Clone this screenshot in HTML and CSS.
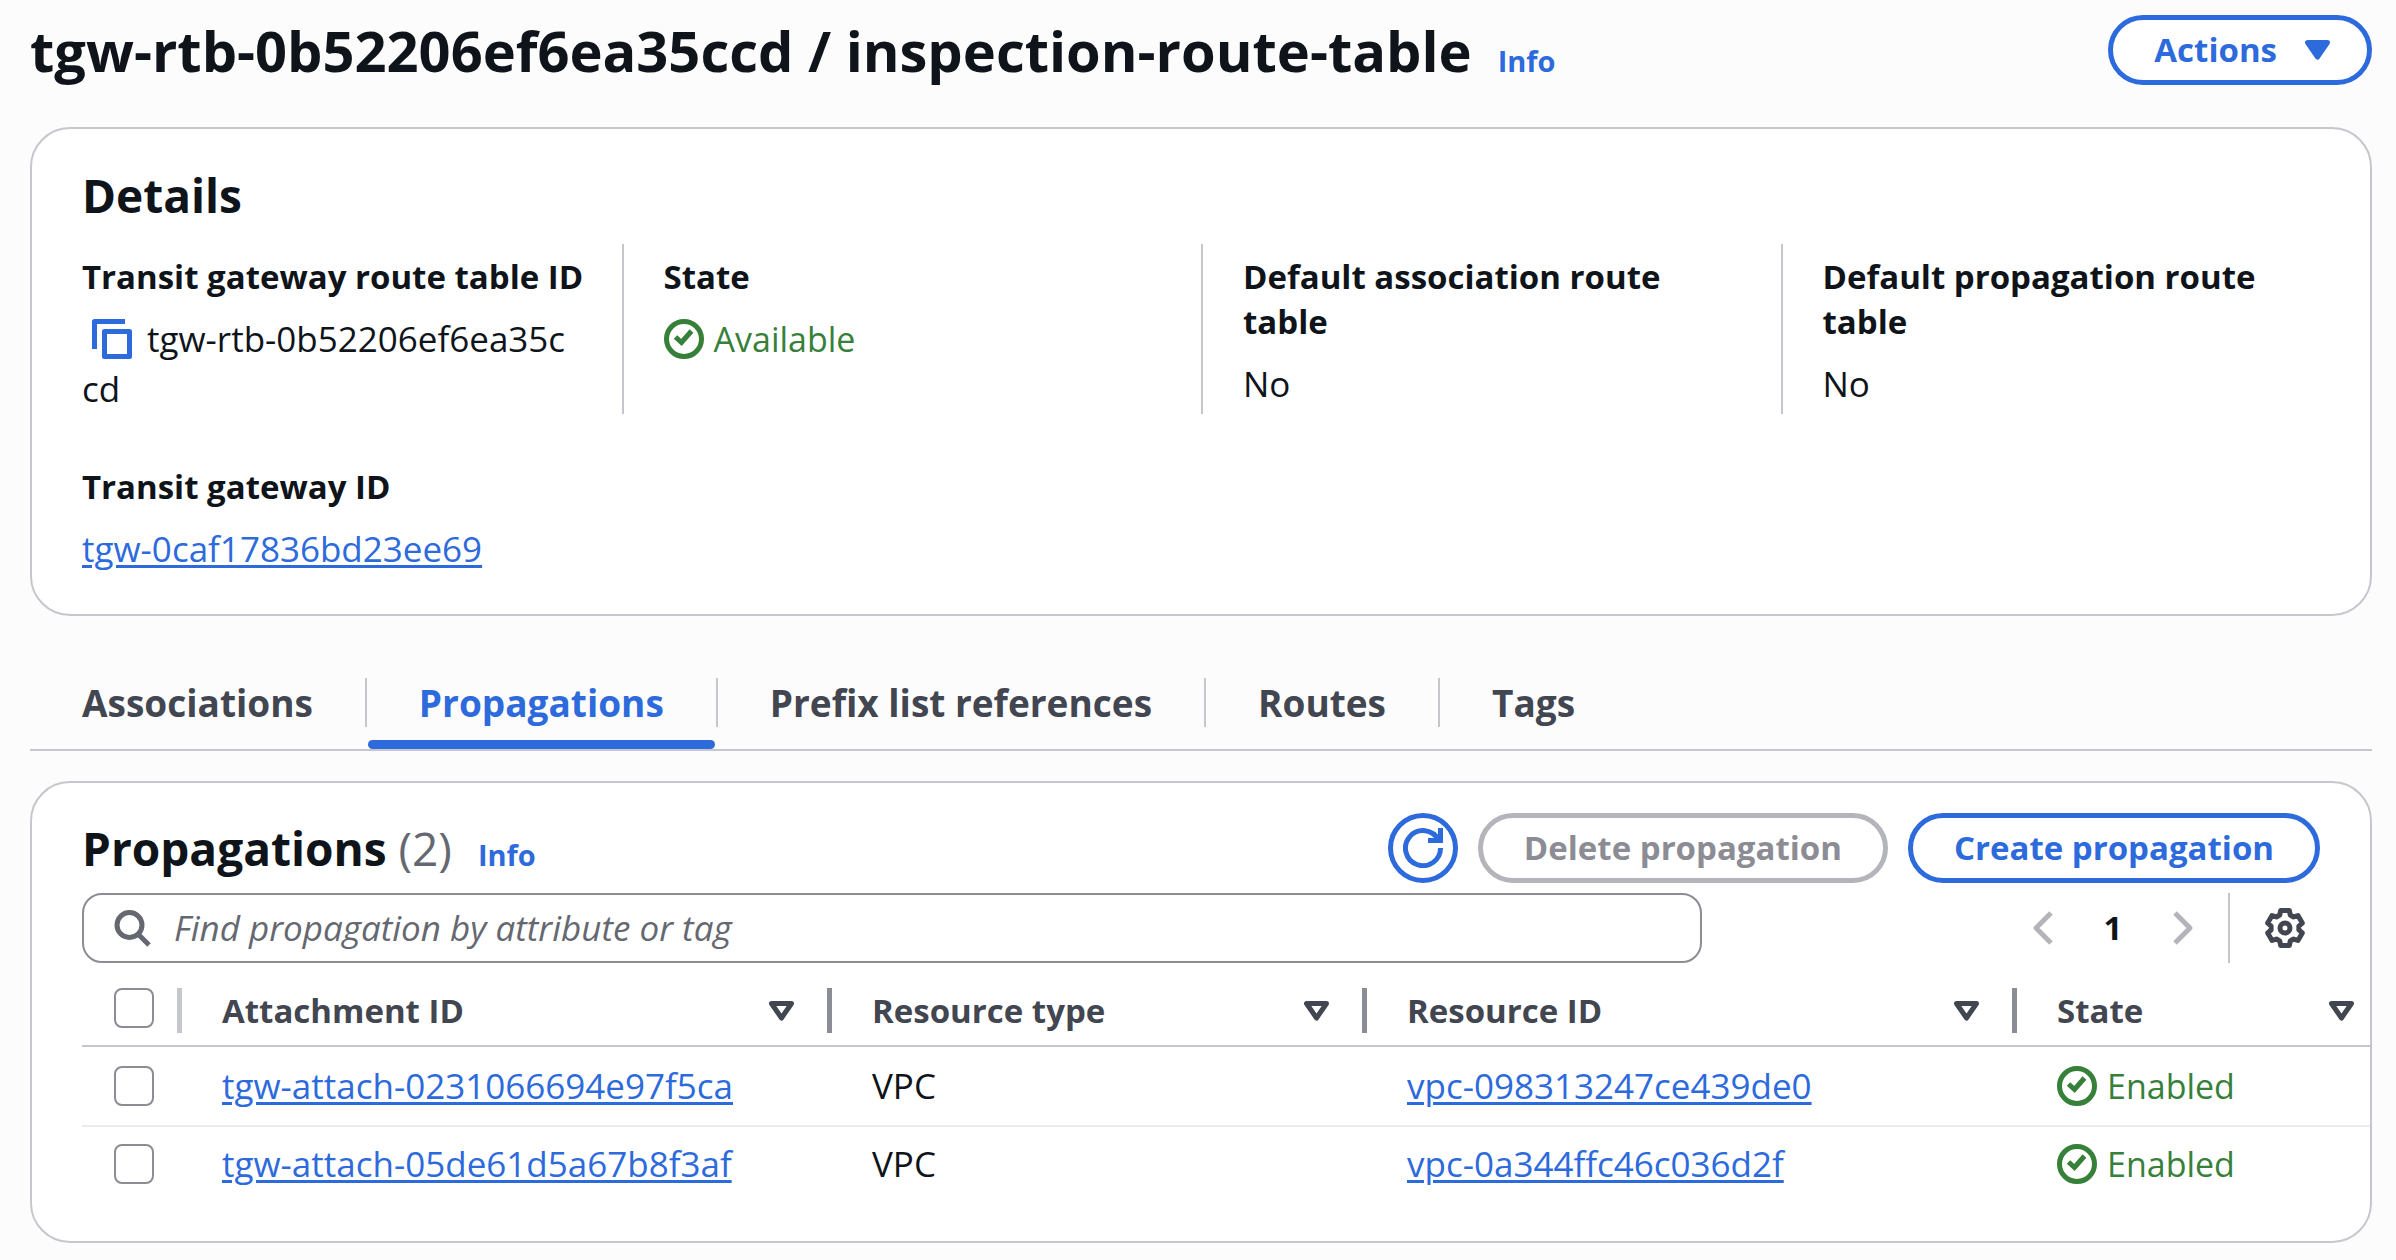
FILE: index.html
```html
<!DOCTYPE html>
<html lang="en">
<head>
<meta charset="utf-8">
<title>Transit gateway route table</title>
<link rel="stylesheet" href="styles.css">
</head>
<body>
<svg class="defs" aria-hidden="true">
  <symbol id="caret" viewBox="0 0 25 20"><path d="M2.5 2.5h20l-10 14.5z" fill="currentColor" stroke="currentColor" stroke-width="5" stroke-linejoin="round"/></symbol>
  <symbol id="sort" viewBox="0 0 25 20"><path d="M2.5 2.5h20l-10 14.5z" fill="none" stroke="currentColor" stroke-width="5" stroke-linejoin="round"/></symbol>
  <symbol id="ok" viewBox="0 0 40 40"><g fill="none" stroke="currentColor" stroke-width="5"><circle cx="20" cy="20" r="17.5"/><path d="M11.5 18l6 5.500L27.500 12"/></g></symbol>
</svg>

<header class="page-header">
  <div class="title-group">
    <h1 class="page-title">tgw-rtb-0b52206ef6ea35ccd / inspection-route-table</h1>
    <a class="info" href="#info">Info</a>
  </div>
  <button class="btn btn-menu" type="button">Actions <svg class="caret"><use href="#caret"/></svg></button>
</header>

<main>
  <section class="card details">
    <h2 class="card-title">Details</h2>
    <dl class="details-grid">
      <div class="detail">
        <dt>Transit gateway route table ID</dt>
        <dd class="break"><button class="copy" type="button" aria-label="Copy ID"><svg class="icon" viewBox="0 0 40 40"><g fill="none" stroke="currentColor" stroke-width="5" stroke-linejoin="round"><path d="M2.500 30V2.500H33"/><path d="M12.500 12.500h25v25h-25z"/></g></svg></button>tgw-rtb-0b52206ef6ea35ccd</dd>
      </div>
      <div class="detail">
        <dt>State</dt>
        <dd class="status"><svg class="icon"><use href="#ok"/></svg>Available</dd>
      </div>
      <div class="detail">
        <dt>Default association route table</dt>
        <dd>No</dd>
      </div>
      <div class="detail">
        <dt>Default propagation route table</dt>
        <dd>No</dd>
      </div>
      <div class="detail">
        <dt>Transit gateway ID</dt>
        <dd><a class="link" href="#tgw">tgw-0caf17836bd23ee69</a></dd>
      </div>
    </dl>
  </section>

  <div class="tabs" role="tablist">
    <button class="tab" type="button" role="tab">Associations</button>
    <button class="tab active" type="button" role="tab" aria-selected="true">Propagations</button>
    <button class="tab" type="button" role="tab">Prefix list references</button>
    <button class="tab" type="button" role="tab">Routes</button>
    <button class="tab" type="button" role="tab">Tags</button>
  </div>

  <section class="card propagations">
    <div class="toolbar">
      <div class="title-group">
        <h2 class="card-title">Propagations <span class="count">(2)</span></h2>
        <a class="info" href="#info">Info</a>
      </div>
      <div class="actions">
        <button class="btn btn-round" type="button" aria-label="Refresh"><svg class="icon" viewBox="0 0 40 40"><g fill="none" stroke="currentColor" stroke-width="5"><path d="M37.500 20A17.500 17.500 0 1 1 35.500 12"/><path d="M37.500 0v12.500H25"/></g></svg></button>
        <button class="btn" type="button" disabled>Delete propagation</button>
        <button class="btn" type="button">Create propagation</button>
      </div>
    </div>

    <div class="filter-row">
      <label class="search">
        <svg class="icon" viewBox="0 0 40 40"><g fill="none" stroke="currentColor" stroke-width="5"><circle cx="15.500" cy="17" r="12.500"/><path d="M24 26l11 11"/></g></svg>
        <input type="search" aria-label="Find propagation" placeholder="Find propagation by attribute or tag">
      </label>
      <nav class="pager" aria-label="Pages">
        <button class="icon-btn" type="button" aria-label="Previous page" disabled><svg class="icon" viewBox="0 0 40 40"><path d="M28 5L13 20l15 15" fill="none" stroke="currentColor" stroke-width="5" stroke-linejoin="round"/></svg></button>
        <span class="page">1</span>
        <button class="icon-btn" type="button" aria-label="Next page" disabled><svg class="icon" viewBox="0 0 40 40"><path d="M12 5l15 15-15 15" fill="none" stroke="currentColor" stroke-width="5" stroke-linejoin="round"/></svg></button>
        <div class="prefs">
          <button class="icon-btn" type="button" aria-label="Preferences"><svg class="icon" viewBox="0 0 40 40"><g fill="none" stroke="currentColor" stroke-width="5" stroke-linejoin="round"><path d="M15.650 2.530L24.350 2.530L25.240 7.020L28.620 8.970L32.950 7.500L37.300 15.040L33.860 18.050L33.860 21.950L37.300 24.960L32.950 32.500L28.620 31.030L25.240 32.980L24.350 37.470L15.650 37.470L14.760 32.980L11.380 31.030L7.050 32.500L2.700 24.960L6.140 21.950L6.140 18.050L2.700 15.040L7.050 7.500L11.380 8.970L14.760 7.020z"/><circle cx="20" cy="20" r="5"/></g></svg></button>
        </div>
      </nav>
    </div>

    <table class="table">
      <colgroup><col class="c-check"><col class="c-wide"><col class="c-type"><col class="c-wide"><col></colgroup>
      <thead>
        <tr>
          <th scope="col"><div class="th-check"><input class="check" type="checkbox" aria-label="Select all"></div></th>
          <th scope="col"><div class="th">Attachment ID<svg class="caret"><use href="#sort"/></svg></div></th>
          <th scope="col"><div class="th">Resource type<svg class="caret"><use href="#sort"/></svg></div></th>
          <th scope="col"><div class="th">Resource ID<svg class="caret"><use href="#sort"/></svg></div></th>
          <th scope="col"><div class="th">State<svg class="caret"><use href="#sort"/></svg></div></th>
        </tr>
      </thead>
      <tbody>
        <tr>
          <td class="td-check"><input class="check" type="checkbox" aria-label="Select tgw-attach-0231066694e97f5ca"></td>
          <td><a class="link" href="#a1">tgw-attach-0231066694e97f5ca</a></td>
          <td>VPC</td>
          <td><a class="link" href="#v1">vpc-098313247ce439de0</a></td>
          <td><div class="status"><svg class="icon"><use href="#ok"/></svg>Enabled</div></td>
        </tr>
        <tr>
          <td class="td-check"><input class="check" type="checkbox" aria-label="Select tgw-attach-05de61d5a67b8f3af"></td>
          <td><a class="link" href="#a2">tgw-attach-05de61d5a67b8f3af</a></td>
          <td>VPC</td>
          <td><a class="link" href="#v2">vpc-0a344ffc46c036d2f</a></td>
          <td><div class="status"><svg class="icon"><use href="#ok"/></svg>Enabled</div></td>
        </tr>
      </tbody>
    </table>
  </section>
</main>
</body>
</html>
```
FILE: styles.css
```css
:root {
  --blue: #2d6adb;
  --green: #37803a;
  --text: #0f141a;
  --muted: #424650;
  --gray: #656871;
  --line: #c6c6cd;
  --control: #8c8c94;
}

* { box-sizing: border-box; }

body {
  margin: 0;
  padding: 15px 24px 16px 30px;
  background: #fcfcfd;
  color: var(--text);
  font: 400 35px/50px "Open Sans", sans-serif;
}

h1, h2, dl, dd { margin: 0; }

button { font: inherit; color: inherit; background: none; border: 0; padding: 0; }

.defs { position: absolute; width: 0; height: 0; }
.icon { display: block; flex: none; width: 40px; height: 40px; }
.caret { display: block; flex: none; width: 25px; height: 20px; }

.page-header { display: flex; align-items: center; justify-content: space-between; margin-bottom: 42px; }
.title-group { display: flex; align-items: baseline; gap: 26px; }
.page-title { font-size: 56px; font-weight: 700; line-height: 70px; }
.info {
  color: var(--blue);
  font-size: 29px;
  font-weight: 700;
  line-height: 40px;
  text-decoration: none;
}

.btn {
  display: flex;
  align-items: center;
  justify-content: center;
  height: 70px;
  padding: 0 41px;
  border: 5px solid var(--blue);
  border-radius: 35px;
  background: #fff;
  color: var(--blue);
  font-size: 33px;
  font-weight: 700;
}
.btn:disabled { border-color: #b4b4bb; color: var(--control); }
.btn-menu { gap: 28px; padding-right: 37px; }
.btn-round { width: 70px; padding: 0; }

.card {
  border: 2px solid var(--line);
  border-radius: 40px;
  background: #fff;
}
.card-title { font-size: 46px; font-weight: 700; line-height: 60px; }
.count { color: var(--gray); font-weight: 400; }

.details { padding: 36px 50px 40px; }
.details-grid {
  display: grid;
  grid-template-columns: repeat(4, 1fr);
  row-gap: 40px;
  margin: 19px -40px 0;
}
.detail { padding: 10px 40px 0; border-left: 2px solid var(--line); }
.detail:nth-child(4n+1) { border-left-color: transparent; padding: 10px 30px 0 38px; }
.detail dt { margin-bottom: 15px; font-size: 33px; font-weight: 700; line-height: 45px; }
.break { padding-right: 20px; word-break: break-all; }
.copy { display: inline-block; margin: 0 15px 0 10px; color: var(--blue); vertical-align: -7px; line-height: 40px; height: 40px; }

.link { color: var(--blue); text-decoration: underline; text-decoration-thickness: 3px; text-underline-offset: 3px; }
.status { display: flex; align-items: center; gap: 10px; color: var(--green); font-size: 34px; }

.tabs { display: flex; margin: 62px 0 30px; border-bottom: 2px solid var(--line); }
.tab {
  position: relative;
  height: 71px;
  padding: 0 52px 21px;
  color: var(--muted);
  font-size: 37px;
  font-weight: 700;
  line-height: 50px;
}
.tab + .tab { margin-left: 2px; }
.tab:not(:last-child)::after {
  content: "";
  position: absolute;
  top: 0;
  right: -2px;
  width: 2px;
  height: 49px;
  background: var(--line);
}
.tab.active { color: var(--blue); }
.tab.active::before {
  content: "";
  position: absolute;
  left: 1px;
  right: 1px;
  bottom: 0;
  height: 9px;
  border-radius: 5px;
  background: var(--blue);
}

.propagations { padding: 30px 0 40px 50px; }
.toolbar { display: flex; align-items: center; justify-content: space-between; padding-right: 50px; }
.actions { display: flex; gap: 20px; }

.filter-row { display: flex; justify-content: space-between; margin-top: 10px; padding-right: 50px; }
.search {
  display: flex;
  align-items: center;
  flex: 0 1 1620px;
  gap: 20px;
  height: 70px;
  padding: 0 30px;
  border: 2px solid var(--control);
  border-radius: 20px;
  color: var(--gray);
}
.search input {
  flex: 1;
  min-width: 0;
  border: 0;
  outline: 0;
  padding: 0;
  background: none;
  color: var(--text);
  font: inherit;
}
.search input::placeholder { color: var(--gray); font-style: italic; opacity: 1; }

.pager { display: flex; align-items: center; }
.page { width: 100px; text-align: center; font-size: 33px; font-weight: 700; }
.icon-btn { color: var(--muted); }
.icon-btn:disabled { color: #b4b4bb; }
.prefs {
  display: flex;
  align-items: center;
  height: 70px;
  margin-left: 25px;
  padding: 0 15px 0 35px;
  border-left: 2px solid var(--line);
}

.table { width: 100%; border-collapse: separate; border-spacing: 0; table-layout: fixed; }
.c-check { width: 100px; }
.c-wide { width: 650px; }
.c-type { width: 535px; }
.table th { padding: 25px 0 12px; border-bottom: 2px solid var(--line); }
.th, .th-check { display: flex; height: 45px; border-right: 5px solid var(--control); }
.th {
  align-items: center;
  justify-content: space-between;
  padding: 0 33px 0 40px;
  color: var(--muted);
  font-size: 33px;
  font-weight: 700;
  line-height: 45px;
}
.th-check { padding-left: 32px; border-right-color: var(--line); }
th:last-child .th { padding-right: 16px; border-right: 0; }
.table td { padding: 12px 0 12px 40px; vertical-align: middle; }
.table td.td-check { padding-left: 32px; }
tbody tr:first-child td { padding-top: 14px; padding-bottom: 14px; border-bottom: 2px solid #ebebf0; }

.check {
  display: block;
  width: 40px;
  height: 40px;
  margin: 0;
  border: 2px solid var(--control);
  border-radius: 8px;
  background: #fff;
  appearance: none;
}
```
